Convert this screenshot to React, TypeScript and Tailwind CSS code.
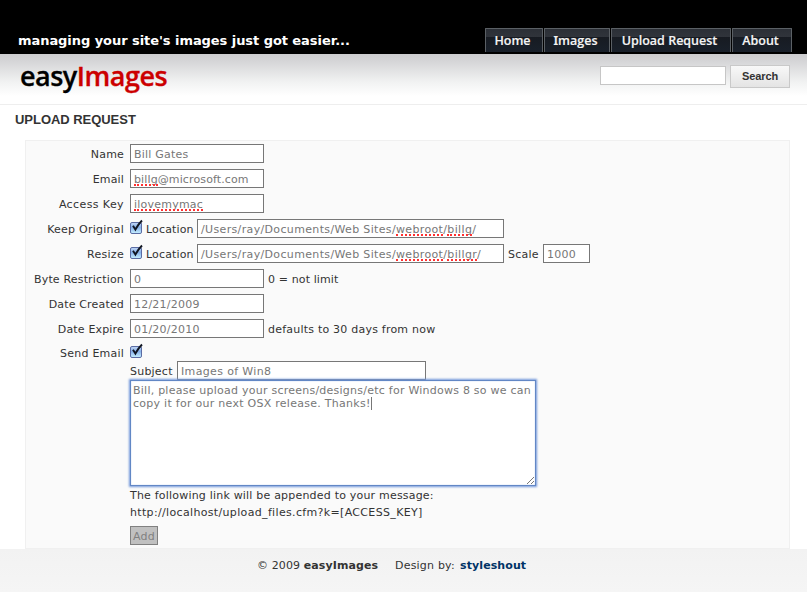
import type { ReactNode } from "react";

function Row({ label, labelStyle = "tracking-[0.17px]", children }: { label: string; labelStyle?: string; children: ReactNode }) {
  return (
    <div className="flex h-[25px] items-start">
      <div className={"w-[98px] shrink-0 text-right leading-[21px] " + labelStyle}>{label}</div>
      <div className="ml-[6px] flex items-start leading-[21px]">{children}</div>
    </div>
  );
}

function Field({ size, children }: { size: string; children: ReactNode }) {
  return (
    <div className={"h-[19px] shrink-0 border border-[#777] bg-white pl-[3px] leading-[19px] text-[#777] whitespace-pre " + size}>
      {children}
    </div>
  );
}

function Misspelled({ children }: { children: ReactNode }) {
  return (
    <span className="relative inline-block leading-[19px]">
      {children}
      <span className="absolute bottom-[3px] left-0 w-full border-b-2 border-dotted border-[#ff3030]" />
    </span>
  );
}

function Check({ place = "" }: { place?: string }) {
  return (
    <svg width="16" height="17" viewBox="0 0 16 17" className={"shrink-0 " + place}>
      <defs>
        <linearGradient id="box" x1="0" y1="0" x2="0" y2="1">
          <stop offset="0" stopColor="#c4d8f5" />
          <stop offset=".45" stopColor="#86b0ea" />
          <stop offset="1" stopColor="#c8f1ff" />
        </linearGradient>
      </defs>
      <rect x=".5" y="3.5" width="11" height="11" rx="1.5" fill="url(#box)" stroke="#5b6ca3" />
      <path d="M3 6.8 5.4 10.5Q8 5.5 12 1.5" fill="none" stroke="#111622" strokeWidth="1.9" />
    </svg>
  );
}

function Tab({ size, children }: { size: string; children: ReactNode }) {
  return (
    <div className={"h-6 border border-b-0 border-[#5b6065] bg-[linear-gradient(#2b2f36_0,#30343b_8px,#171b22_8px,#19202a_100%)] text-center leading-[24px] rounded-t-[1px] " + size}>
      {children}
    </div>
  );
}

export default function App() {
  return (
    <div className="h-[604px] w-[807px] overflow-hidden bg-white font-['DejaVu_Sans',sans-serif] text-[11px] tracking-[0.22px] text-[#333] whitespace-nowrap">
      <header className="flex h-[54px] justify-between bg-black pr-[15px] pl-[18px] text-white">
        <div className="pt-[31px] text-[13px] leading-[19px] font-bold tracking-[-0.06px]">managing your site's images just got easier...</div>
        <nav className="flex gap-px pt-[28px] font-['Open_Sans',sans-serif] text-[12.5px] font-semibold tracking-[0px] text-[#f4f4f4] [-webkit-text-stroke:0.15px_#f4f4f4]">
          <Tab size="w-[58px] pr-[3px]">Home</Tab>
          <Tab size="w-[66px] pr-[3px]"><span className="font-['Noto_Sans',sans-serif]">I</span>mages</Tab>
          <Tab size="w-[120px] pr-[3px]">Upload Request</Tab>
          <Tab size="w-[60px] pr-[3px]">About</Tab>
        </nav>
      </header>
      <div className="flex h-[51px] justify-between border-b border-[#eee] bg-[linear-gradient(#cdcdcf_0,#d5d5d7_7px,#f1f2f2_28px,#fff_42px)] pr-[17px] pl-[20px]">
        <div className="pt-[4px] font-['Open_Sans',sans-serif] text-[27px] leading-[36px] font-semibold tracking-[-0.5px] text-black [-webkit-text-stroke:0.3px_currentColor]">
          easy<span className="text-[#cc0000]">Images</span>
        </div>
        <div className="flex">
          <div className="mt-[12px] mr-1 h-[19px] w-[126px] border border-[#c6c6c6] bg-white" />
          <div className="mt-[11px] h-[23px] w-[60px] border border-[#c9c9c9] bg-gradient-to-b from-[#f8f8f8] to-[#e4e4e4] text-center font-['Liberation_Sans',sans-serif] text-[11px] leading-[21px] font-bold tracking-[-0.1px]">Search</div>
        </div>
      </div>
      <h1 className="h-[35px] pl-[15px] pt-[5px] font-['Liberation_Sans',sans-serif] text-[13px] leading-[20px] font-bold tracking-[-0.04px]">UPLOAD REQUEST</h1>
      <main className="ml-[25px] h-[409px] w-[765px] border border-[#f0f0f0] bg-[#fafafa] pt-[3px]">
        <Row label="Name"><Field size="w-[134px]">Bill Gates</Field></Row>
        <Row label="Email"><Field size="w-[134px] tracking-[0.12px]"><Misspelled>billg</Misspelled>@microsoft.com</Field></Row>
        <Row label="Access Key" labelStyle="tracking-[0.4px]"><Field size="w-[134px]"><Misspelled>ilovemymac</Misspelled></Field></Row>
        <Row label="Keep Original" labelStyle="tracking-[0.24px]">
          <Check />
          <span className="w-[51px] tracking-[0.15px]">Location</span>
          <Field size="w-[307px] tracking-[0.35px]">/Users/ray/Documents/Web Sites/<Misspelled>webroot</Misspelled>/<Misspelled>billg</Misspelled>/</Field>
        </Row>
        <Row label="Resize" labelStyle="tracking-[0.3px]">
          <Check />
          <span className="w-[51px] tracking-[0.15px]">Location</span>
          <Field size="w-[307px] tracking-[0.35px]">/Users/ray/Documents/Web Sites/<Misspelled>webroot</Misspelled>/<Misspelled>billgr</Misspelled>/</Field>
          <span className="ml-1 w-[35px]">Scale</span>
          <Field size="w-[47px]">1000</Field>
        </Row>
        <Row label="Byte Restriction"><Field size="w-[134px]">0</Field><span className="ml-1 tracking-[0.12px]">0 = not limit</span></Row>
        <Row label="Date Created"><Field size="w-[134px]">12/21/2009</Field></Row>
        <Row label="Date Expire"><Field size="w-[134px]">01/20/2010</Field><span className="ml-1">defaults to 30 days from now</span></Row>
        <div className="flex h-[17px]">
          <div className="w-[98px] text-right leading-[19px]">Send Email</div>
          <div className="ml-[6px]"><Check place="-mt-px" /></div>
        </div>
        <div className="ml-[104px]">
          <div className="flex h-[19px] leading-[21px]">
            <span className="w-[47px]">Subject</span>
            <Field size="w-[249px] tracking-[0.35px]">Images of Win8</Field>
          </div>
          <div className="relative flex h-[106px] w-[406px] items-start justify-start border border-[#6287c5] bg-white pt-[3px] pl-[2px] leading-[13px] tracking-[0.24px] text-[#777] shadow-[0_0_2px_1px_#7398da,inset_0_0_1px_#7398da]">
            <div>
              <div>Bill, please upload your screens/designs/etc for Windows 8 so we can</div>
              <div className="tracking-[0.27px]">copy it for our next OSX release. Thanks!<span className="inline-block h-[13px] w-px bg-[#777] align-top" /></div>
            </div>
            <svg className="absolute right-0 bottom-0" width="9" height="9" viewBox="0 0 9 9" stroke="#666" strokeWidth=".9">
              <path d="M1 8 8 1M5 8 8 5" />
            </svg>
          </div>
          <div className="mt-[1px] leading-[17px] tracking-[0.2px]">The following link will be appended to your message:</div>
          <div className="leading-[17px] tracking-[0.34px]">http://localhost/upload_files.cfm?k=[ACCESS_KEY]</div>
          <div className="mt-[5px] h-[19px] w-[28px] border border-[#808080] bg-[#c0c0c0] text-center leading-[19px] text-[#808080]">Add</div>
        </div>
      </main>
      <footer className="h-[43px] bg-gradient-to-b from-[#f2f2f2] to-[#f5f5f5] pl-[257px] leading-[33px]">
        <div className="flex tracking-[0.1px]">
          <span className="w-[138px]">© 2009 <b>easyImages</b></span>
          <span className="w-[65px] tracking-[0.2px]">Design by:</span>
          <b className="text-[#003366]">styleshout</b>
        </div>
      </footer>
    </div>
  );
}
